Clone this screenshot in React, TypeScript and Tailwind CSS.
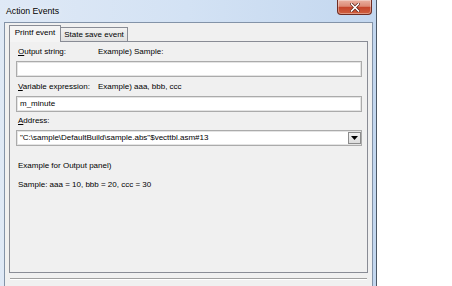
import React from 'react'

function Label({ text, hint }: { text: string; hint?: string }) {
    // first letter is the access key, drawn underlined
    return (
        <div className="flex h-[10px] items-center pl-[2px]">
            <span className="w-[80px]">
                <span className="underline underline-offset-[1px]">{text[0]}</span>
                {text.slice(1)}
            </span>
            {hint && <span>{hint}</span>}
        </div>
    )
}

function TextBox({ value, combo }: { value?: string; combo?: boolean }) {
    return (
        <div className="flex h-[16px] items-center border border-[#ababab] bg-white pl-[3px] shadow-[inset_0_0_0_1px_#e4e4e4]">
            <span className="flex-1 whitespace-nowrap">{value}</span>
            {combo && (
                <div className="flex h-[12px] w-[13px] items-center justify-center border border-[#8c8c8c] bg-gradient-to-b from-[#f2f2f2] to-[#dcdcdc]">
                    <svg width="7" height="4" viewBox="0 0 7 4">
                        <path d="M0 0h7L3.5 4z" fill="#000" />
                    </svg>
                </div>
            )}
        </div>
    )
}

function CloseButton() {
    return (
        <div className="mr-[4px] flex h-[15px] w-[35px] items-center justify-center rounded-b-[4px] border border-t-0 border-[#6f2c22] bg-[linear-gradient(to_bottom,#eab1a2_0%,#dc8a76_45%,#c5452c_52%,#d0603f_100%)] shadow-[inset_0_0_0_1px_rgba(255,255,255,0.35)]">
            <svg width="10" height="9" viewBox="0 0 10 9">
                <path d="M1.5 1l7 7M8.5 1l-7 7" stroke="#5a1f16" strokeWidth="3" strokeLinecap="square" />
                <path d="M1.5 1l7 7M8.5 1l-7 7" stroke="#fff" strokeWidth="1.6" strokeLinecap="square" />
            </svg>
        </div>
    )
}

const App: React.FC = () => {
    return (
        <div className="h-[286px] w-[452px] overflow-hidden bg-white font-['Liberation_Sans',Arial,sans-serif] text-[8px] leading-[10px] text-black">
            {/* window frame */}
            <div className="flex h-[286px] w-[377px] flex-col border-r border-[#4c5866] bg-gradient-to-r from-[#dfe9f6] via-[#d3e2f4] to-[#c3d7ef]">
                {/* title bar */}
                <div className="flex h-[22px] shrink-0 items-start">
                    <span className="pl-[6px] pt-[6px] text-[8.7px] leading-[10px] [text-shadow:0_0_5px_#fff]">
                        Action Events
                    </span>
                    <div className="ml-auto">
                        <CloseButton />
                    </div>
                </div>

                <div className="flex min-h-0 flex-1 pl-[4px] pr-[3px]">
                    <div className="flex flex-1 flex-col border-x border-t border-[#8393a8] bg-[#f0f0f0] px-[4px] pt-px">
                        {/* tabs */}
                        <div className="relative z-10 -mb-px flex h-[18px] items-end">
                            <div className="flex h-[17px] w-[52px] items-center justify-center border-x border-t border-[#898c95] bg-[#f4f4f4] pb-[2px]">
                                Printf event
                            </div>
                            <div className="flex h-[15px] w-[67px] items-center justify-center border-y border-r border-[#898c95] bg-gradient-to-b from-[#f2f2f2] to-[#e0e0e0]">
                                State save event
                            </div>
                        </div>

                        {/* tab page */}
                        <div className="flex h-[232px] shrink-0 flex-col border border-[#898c95] bg-[#f0f0f0] pl-[6px] pr-[5px] pt-[5px]">
                            <Label text="Output string:" hint="Example) Sample:" />
                            <div className="mt-[4px]">
                                <TextBox />
                            </div>
                            <div className="mt-[5px]">
                                <Label text="Variable expression:" hint="Example) aaa, bbb, ccc" />
                            </div>
                            <div className="mt-[4px]">
                                <TextBox value="m_minute" />
                            </div>
                            <div className="mt-[4px]">
                                <Label text="Address:" />
                            </div>
                            <div className="mt-[4px]">
                                <TextBox value={'"C:\\sample\\DefaultBuild\\sample.abs"$vecttbl.asm#13'} combo />
                            </div>
                            <div className="mt-[15px] pl-[2px]">Example for Output panel)</div>
                            <div className="mt-[9px] pl-[2px]">Sample: aaa = 10, bbb = 20, ccc = 30</div>
                        </div>

                        {/* separator above the buttons */}
                        <div className="mx-px mt-[5px] h-[2px] border-b border-t border-b-white border-t-[#a0a0a0]" />
                    </div>
                </div>
            </div>
        </div>
    )
}

export default App
